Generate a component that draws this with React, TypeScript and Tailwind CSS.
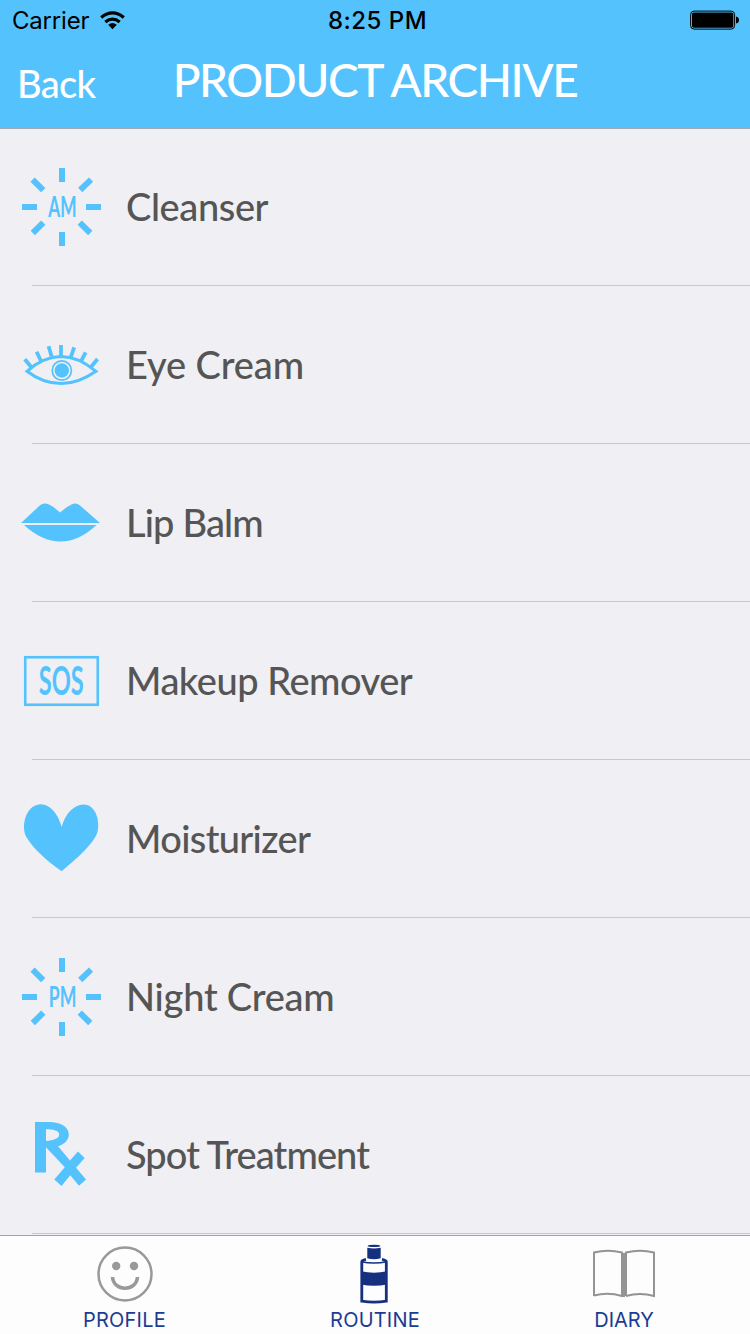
import type { ReactNode } from "react";

const BLUE = "#54c2fd";
const NAVY = "#15307f";

function SunIcon({ label }: { label: string }) {
  return (
    <svg width="80" height="80" viewBox="22 167 80 80" fill={BLUE}>
      <g stroke={BLUE} strokeWidth="6">
        <path d="M62 168v14M62 232v14M22 207h15M86 207h15" />
        <path d="M32.6 179.6l10.6 10.6M91 179.7l-10.8 10.3M32.8 233l10.5-10.4M90.3 233l-10.6-10.4" />
      </g>
      <text
        x={label === "AM" ? 48.2 : 48.8}
        y="217"
        fontSize="29"
        fontFamily="Lato, sans-serif"
        fontWeight="700"
        textLength={label === "AM" ? 28.3 : 27.6}
        lengthAdjust="spacingAndGlyphs"
      >
        {label}
      </text>
    </svg>
  );
}

function EyeIcon() {
  return (
    <svg width="80" height="80" viewBox="22 325 80 80" fill="none" stroke={BLUE} strokeWidth="3">
      <path d="M27 371.3Q43 357 61 356.6Q78 356.6 96 371.3Q78 383.8 61 383.6Q43 383.5 27 371.3Z" />
      <path strokeWidth="3.8" d="M61 345v11M48.6 346.3l3 10.2M36.6 351.7l4.4 9.3M24.8 359.2l7 8.6M74.2 347.3l-3.4 9.8M85.7 352.3l-4.8 9.2M97.5 359l-7 8.6" />
      <circle cx="61.8" cy="370.5" r="9.6" strokeWidth="1.7" />
      <circle cx="61.8" cy="370.5" r="7.2" fill={BLUE} stroke="none" />
    </svg>
  );
}

function LipsIcon() {
  return (
    <svg width="80" height="80" viewBox="22 483 80 80" fill={BLUE} className="overflow-visible">
      <path d="M21 523L40 505.3Q44 502 49 504.6Q54 507 60 512.6Q67 506.5 71.5 504.5Q76 502.3 80 505.5L100 523Z" />
      <path d="M24 525H96.500Q79 541.500 60.500 541.500Q42 541.500 24 525Z" />
    </svg>
  );
}

function SosIcon() {
  return (
    <svg width="80" height="80" viewBox="22 641 80 80" fill={BLUE}>
      <rect x="25.250" y="657.250" width="72.500" height="47.500" fill="none" stroke={BLUE} strokeWidth="2.6" />
      <text x="38.8" y="694.5" fontSize="40.5" fontFamily="Lato, sans-serif" textLength="45" fontWeight="700" lengthAdjust="spacingAndGlyphs">
        SOS
      </text>
    </svg>
  );
}

function HeartIcon() {
  return (
    <svg width="80" height="80" viewBox="22 799 80 80" fill={BLUE}>
      <path d="M61.700 871.200C47 861 33 848.500 26.300 837C21.500 828 24.500 813 32.500 807C45 799 57 810 61.700 827C66 810 80 799.500 91 807C98.500 813 99.500 826 97 833.500C92.500 845 75 860 61.700 871.200Z" />
    </svg>
  );
}

function RxIcon() {
  return (
    <svg width="80" height="80" viewBox="22 1115 80 80" fill={BLUE}>
      <path fillRule="evenodd" d="M35 1122H49C61 1122 68.800 1127 68.800 1134.500C68.800 1140.500 64 1144.300 58 1146.300L70 1160.500L78 1151.500L84.600 1158L76 1167.800L86 1179.500L79 1185.700L70.300 1175.300L61.500 1186L54.300 1179.500L64.800 1167.300L46 1147.300V1172.500H35ZM46 1129.200V1141C53.500 1140.500 59.200 1138.500 59.200 1134.500C59.200 1130.500 53 1129.200 46 1129.200Z" />
    </svg>
  );
}

type Row = { name: string; icon: ReactNode; tracking: string };

const rows: Row[] = [
  { name: "Cleanser", icon: <SunIcon label="AM" />, tracking: "tracking-[-0.4px]" },
  { name: "Eye Cream", icon: <EyeIcon />, tracking: "tracking-[-0.1px]" },
  { name: "Lip Balm", icon: <LipsIcon />, tracking: "tracking-[-0.85px]" },
  { name: "Makeup Remover", icon: <SosIcon />, tracking: "tracking-[-0.5px]" },
  { name: "Moisturizer", icon: <HeartIcon />, tracking: "tracking-[-0.65px]" },
  { name: "Night Cream", icon: <SunIcon label="PM" />, tracking: "tracking-[-0.25px]" },
  { name: "Spot Treatment", icon: <RxIcon />, tracking: "tracking-[-0.9px]" },
];

function StatusBar() {
  return (
    <div className="grid h-10 grid-cols-3 items-center font-[Inter,sans-serif] text-[24px] leading-none text-black">
      <div className="flex items-center gap-[11px] pl-[12px]">
        <span className="pt-[2px] tracking-[-0.2px]">Carrier</span>
        <svg width="25" height="19" viewBox="0 0 25 19" fill="none" stroke="black" strokeWidth="3.2">
          <path d="M1.200 6.400Q12.500-2.800 23.800 6.400M5.300 11Q12.500 5.200 19.700 11" />
          <path d="M8.200 13.700Q12.500 10.300 16.800 13.700L12.500 18.300Z" fill="black" stroke="none" />
        </svg>
      </div>
      <span className="pt-[2px] pl-[5px] text-center font-medium tracking-[0.5px]">8:25 PM</span>
      <svg className="mr-[10px] justify-self-end" width="50" height="20" viewBox="0 0 50 20">
        <rect x="0.600" y="1.100" width="44" height="18" rx="3.500" fill="none" stroke="black" strokeWidth="1" />
        <rect x="2" y="2.500" width="41.300" height="15.200" rx="1.800" />
        <path d="M46 6.500Q49 7 49 10T46 13.500Z" />
      </svg>
    </div>
  );
}

function TabBar() {
  return (
    <nav className="mt-px grid h-[99px] grid-cols-3 border-t border-[#a3a3a8] bg-[#fdfdfd] font-[Inter,sans-serif] text-[20px] leading-6 text-[#1c3c91]">
      <div className="flex flex-col items-center">
        <svg className="mt-[9px]" width="58" height="58" viewBox="96 1245 58 58" fill="none" stroke="#999">
          <circle cx="125" cy="1274" r="26.500" strokeWidth="2.500" />
          <path d="M112.500 1277C113.500 1292 136.500 1292 137.500 1277" strokeWidth="3.600" />
          <g fill="#999" stroke="none">
            <circle cx="116.200" cy="1266" r="4.200" />
            <circle cx="134" cy="1266" r="4.200" />
          </g>
        </svg>
        <span className="mt-[5px] mr-px tracking-[0.2px]">PROFILE</span>
      </div>
      <div className="flex flex-col items-center">
        <svg className="mt-[8px] mr-[2px]" width="30" height="60" viewBox="359 1244 30 60" fill={NAVY}>
          <ellipse cx="374" cy="1245.900" rx="6.400" ry="1.200" />
          <path d="M367.300 1247.700Q374 1249.300 380.700 1247.700V1258.300Q374 1260 367.300 1258.300Z" />
          <path d="M366 1259.400Q361.800 1260.200 361.800 1262V1301.200Q374 1303.200 386.300 1301.200V1262Q386.300 1260.200 382 1259.400" fill="none" stroke={NAVY} strokeWidth="2.800" />
          <path d="M361 1260.700Q374 1263.700 387 1260.700V1262.400Q374 1265 361 1262.400Z" />
          <path d="M361 1271.300Q374 1274 387 1271.300V1284.500Q374 1287 361 1284.500Z" />
        </svg>
        <span className="mt-[4px] tracking-[0.2px]">ROUTINE</span>
      </div>
      <div className="flex flex-col items-center">
        <svg className="mt-[13px] mr-[2px]" width="64" height="50" viewBox="592 1249 64 50" fill="none" stroke="#949494" strokeWidth="2">
          <path d="M594 1296V1252.500Q608 1248.800 622 1252.500V1296Q608 1292 594 1295.500" />
          <path d="M626 1296V1252.500Q640 1248.800 654 1252.500V1296Q640 1292 626 1296" />
          <path d="M624 1253V1297" />
        </svg>
        <span className="mt-[9px] mr-[2px] tracking-[0px]">DIARY</span>
      </div>
    </nav>
  );
}

export default function App() {
  return (
    <div className="flex h-[1334px] w-[750px] flex-col overflow-hidden bg-[#efeff4] font-[Lato,sans-serif]">
      <header className="-mb-px h-[129px] border-b border-[#a3a9b0] bg-[#54c2fd]">
        <StatusBar />
        <div className="grid h-[88px] grid-cols-[172px_1fr_172px] font-medium text-white">
          <span className="pt-[18px] pl-[17px] text-[38px] leading-[50px] tracking-[-0.7px]">Back</span>
          <h1 className="pt-[15px] text-center text-[46px] leading-[50px] font-medium tracking-[-1.4px] whitespace-nowrap">PRODUCT ARCHIVE</h1>
        </div>
      </header>
      <ul>
        {rows.map((row) => (
          <li key={row.name} className="flex h-[158px] flex-col justify-between">
            <div className="flex h-[157px] items-center gap-6 pl-[22px]">
              {row.icon}
              <span className={"pb-[2px] text-[38px] leading-none font-medium text-[#555] " + row.tracking}>{row.name}</span>
            </div>
            <div className="ml-8 h-px bg-[#c8c7cc]" />
          </li>
        ))}
      </ul>
      <TabBar />
    </div>
  );
}
